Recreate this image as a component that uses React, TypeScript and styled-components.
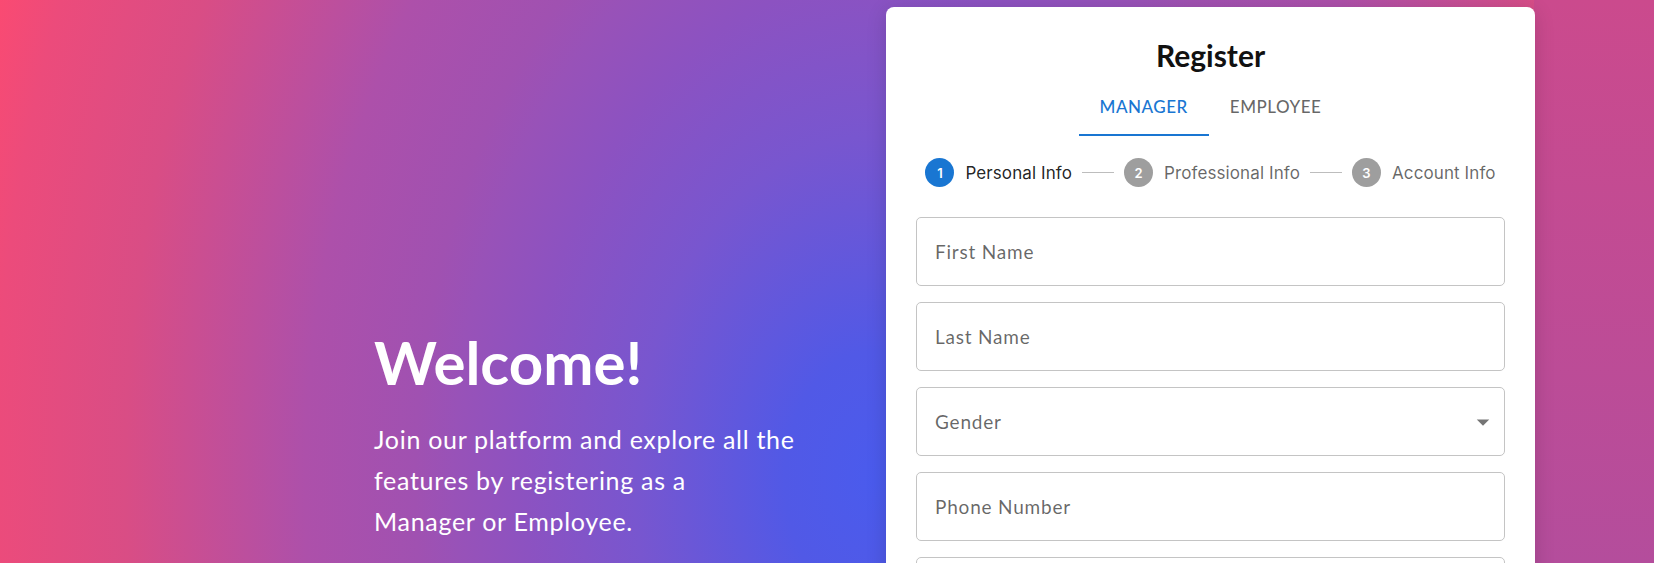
import { Fragment } from 'react'
import styled, { createGlobalStyle } from 'styled-components'

const GlobalStyle = createGlobalStyle`
  * {
    box-sizing: border-box;
  }

  body {
    margin: 0;
    font-family: Lato, 'Liberation Sans', sans-serif;
  }
`

const Page = styled.main`
  min-height: 100vh;
  display: flex;
  align-items: flex-start;
  gap: 72px;
  padding: 7px 119px 40px 374px;
  background:
    linear-gradient(180deg, #cb4a8d 0%, #b44d9c 100%) right top / 120px 100%
      no-repeat fixed,
    radial-gradient(
        1000px 1430px at 875px 480px,
        #4a5bed 0%,
        #5159e6 9%,
        #7856cf 24%,
        #8c52c1 35%,
        #9852b8 42%,
        #a051b1 46%,
        #ad50aa 57%,
        #d94d85 75%,
        #ec4b7b 88%,
        #fd4a70 95%
      )
      fixed;
`

const Intro = styled.section`
  width: 440px;
  padding-top: 319px;
  color: #fff;
`

const Headline = styled.h1`
  margin: 0 0 21px;
  font-size: 60px;
  line-height: 72px;
  font-weight: 700;
`

const Lead = styled.p`
  margin: 0;
  font-size: 25px;
  line-height: 41px;
  letter-spacing: 0.7px;
`

const Card = styled.section`
  width: 649px;
  flex-shrink: 0;
  padding: 30px;
  background: #fff;
  border-radius: 8px;
  box-shadow: 0 4px 20px rgba(0, 0, 0, 0.15);
`

const Title = styled.h2`
  margin: 0 0 5px;
  text-align: center;
  font-size: 30px;
  line-height: 36px;
  font-weight: 700;
  color: #111;
`

const Tabs = styled.div`
  display: flex;
  justify-content: center;
`

const Tab = styled.button<{ $active?: boolean }>`
  height: 58px;
  padding: 0 21px;
  border: none;
  border-bottom: 2px solid ${({ $active }) => ($active ? '#1976d2' : 'transparent')};
  background: none;
  font-family: Lato, 'Liberation Sans', sans-serif;
  font-size: 17px;
  font-weight: 500;
  letter-spacing: 0.03em;
  text-transform: uppercase;
  color: ${({ $active }) => ($active ? '#1976d2' : 'rgba(0, 0, 0, 0.6)')};
  cursor: pointer;
`

const Stepper = styled.ol`
  display: flex;
  align-items: center;
  justify-content: center;
  margin: 22px 0 0;
  padding: 0;
  list-style: none;
`

const Step = styled.li`
  display: flex;
  align-items: center;
  gap: 11px;
`

const StepIcon = styled.span<{ $active?: boolean }>`
  width: 29px;
  height: 29px;
  border-radius: 50%;
  display: grid;
  place-items: center;
  background: ${({ $active }) => ($active ? '#1976d2' : '#9e9e9e')};
  color: #fff;
  font-family: Inter, 'Liberation Sans', sans-serif;
  font-size: 13px;
  font-weight: 600;
`

const StepLabel = styled.span<{ $active?: boolean }>`
  font-family: Inter, 'Liberation Sans', sans-serif;
  font-size: 17px;
  letter-spacing: 0.1px;
  color: ${({ $active }) => ($active ? 'rgba(0, 0, 0, 0.87)' : 'rgba(0, 0, 0, 0.6)')};
`

const Connector = styled.li`
  width: 32px;
  height: 1px;
  margin: 0 10px;
  background: #bdbdbd;
`

const Fields = styled.div`
  display: flex;
  flex-direction: column;
  gap: 16px;
  margin-top: 30px;
`

const Input = styled.input`
  height: 69px;
  padding: 0 18px;
  border: 1px solid #c4c4c4;
  border-radius: 5px;
  font-family: Lato, 'Liberation Sans', sans-serif;
  font-size: 19px;
  letter-spacing: 0.8px;
  color: #222;
  outline: none;

  &::placeholder {
    color: rgba(0, 0, 0, 0.6);
  }
`

const Select = styled.div`
  height: 69px;
  display: flex;
  align-items: center;
  justify-content: space-between;
  padding: 0 6px 0 18px;
  border: 1px solid #c4c4c4;
  border-radius: 5px;
  font-size: 19px;
  letter-spacing: 0.8px;
  color: rgba(0, 0, 0, 0.6);
`

const NextButton = styled.button`
  margin-top: 24px;
  width: 100%;
  height: 50px;
  border: none;
  border-radius: 5px;
  background: #1976d2;
  color: #fff;
  font-family: Lato, 'Liberation Sans', sans-serif;
  font-size: 17px;
  text-transform: uppercase;
`

const steps = ['Personal Info', 'Professional Info', 'Account Info']

export default function App() {
  return (
    <>
      <GlobalStyle />
      <Page>
        <Intro>
          <Headline>Welcome!</Headline>
          <Lead>
            Join our platform and explore all the
            <br />
            features by registering as a
            <br />
            Manager or Employee.
          </Lead>
        </Intro>
        <Card>
          <Title>Register</Title>
          <Tabs>
            <Tab $active>Manager</Tab>
            <Tab>Employee</Tab>
          </Tabs>
          <Stepper>
            {steps.map((label, i) => (
              <Fragment key={label}>
                {i > 0 && <Connector />}
                <Step>
                  <StepIcon $active={i === 0}>{i + 1}</StepIcon>
                  <StepLabel $active={i === 0}>{label}</StepLabel>
                </Step>
              </Fragment>
            ))}
          </Stepper>
          <Fields>
            <Input placeholder='First Name' />
            <Input placeholder='Last Name' />
            <Select>
              Gender
              <svg width='30' height='30' viewBox='0 0 24 24'>
                <path d='M7 10l5 5 5-5z' fill='rgba(0,0,0,0.54)' />
              </svg>
            </Select>
            <Input placeholder='Phone Number' />
            <Input placeholder='Date of Birth' />
          </Fields>
          <NextButton>Next</NextButton>
        </Card>
      </Page>
    </>
  )
}
